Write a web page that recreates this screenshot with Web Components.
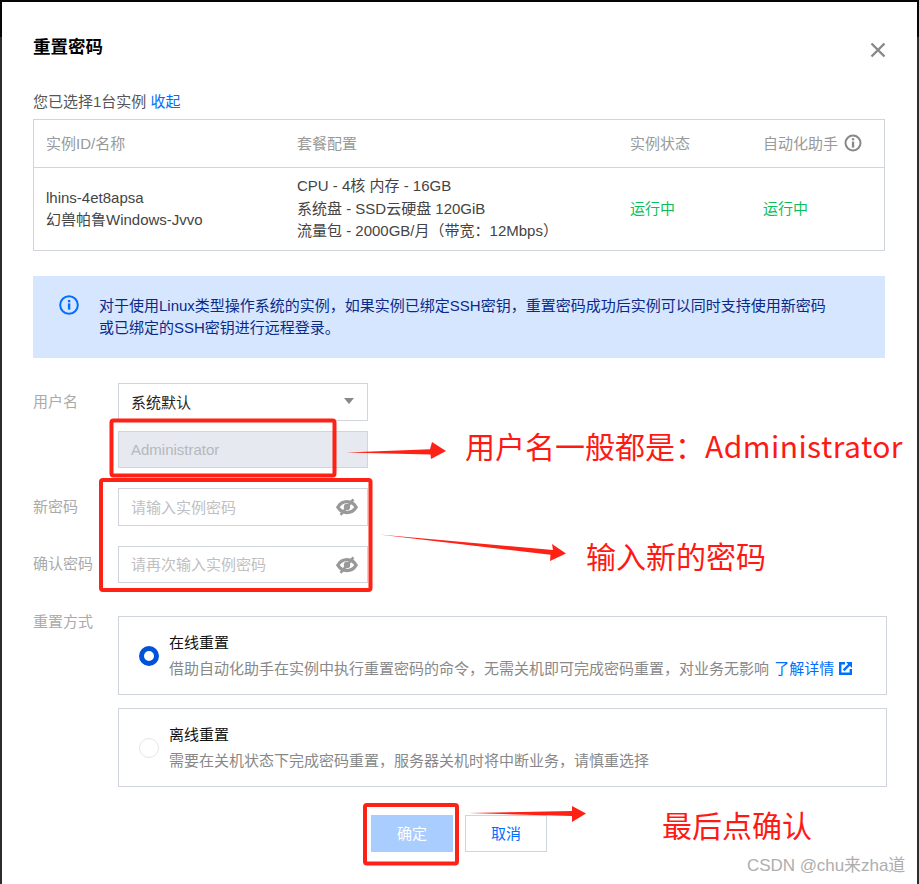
<!DOCTYPE html>
<html lang="zh">
<head>
<meta charset="utf-8">
<style>
html,body{margin:0;padding:0;height:884px;overflow:hidden}
body{background:linear-gradient(#060606 37px,#2c2c2c 37px);font-family:"Liberation Sans","Noto Sans CJK SC",sans-serif;font-size:15px;color:#444}
</style>
</head>
<body>
<reset-dialog>
  <span slot="title">重置密码</span>
  <selected-line>您已选择1台实例 <a>收起</a></selected-line>
  <instance-table></instance-table>
  <info-notice>对于使用Linux类型操作系统的实例，如果实例已绑定SSH密钥，重置密码成功后实例可以同时支持使用新密码<br>或已绑定的SSH密钥进行远程登录。</info-notice>
  <form-row label="用户名" h="38" gap="25"><select-box>系统默认</select-box></form-row>
  <form-row h="37" gap="10"><text-box disabled>Administrator</text-box></form-row>
  <form-row label="新密码" h="38" gap="20"><text-box eye>请输入实例密码</text-box></form-row>
  <form-row label="确认密码" h="37" lh="35" gap="20"><text-box eye>请再次输入实例密码</text-box></form-row>
  <form-row label="重置方式" h="79" lh="11" gap="33">
    <radio-card checked>
      <span slot="title">在线重置</span>借助自动化助手在实例中执行重置密码的命令，无需关机即可完成密码重置，对业务无影响 <ext-link>了解详情</ext-link>
    </radio-card>
  </form-row>
  <form-row h="79" gap="13">
    <radio-card>
      <span slot="title">离线重置</span>需要在关机状态下完成密码重置，服务器关机时将中断业务，请慎重选择
    </radio-card>
  </form-row>
  <button-bar><action-button primary>确定</action-button><action-button>取消</action-button></button-bar>
</reset-dialog>
<red-annotations></red-annotations>

<script>
function def(name, css, html, init){
  customElements.define(name, class extends HTMLElement{
    connectedCallback(){
      if(this.shadowRoot) return;
      const r=this.attachShadow({mode:'open'});
      r.innerHTML='<style>'+css+'</style>'+html;
      if(init) init(this,r);
    }
  });
}
def('reset-dialog',`
  :host{display:block;position:absolute;left:2px;top:2px;width:915px;height:882px;box-sizing:border-box;background:#fff;padding:33px 30px 0 31px}
  .t{font-size:17.5px;font-weight:700;color:#000;line-height:24px}
  svg{position:absolute;left:868px;top:40px}
`,`<div class="t"><slot name="title"></slot></div>
<svg width="16" height="16" viewBox="0 0 16 16"><path d="M1.5 1.5L14.5 14.5M14.5 1.5L1.5 14.5" stroke="#888" stroke-width="2.4" fill="none"/></svg>
<slot></slot>`);
def('selected-line',`
  :host{display:block;margin-top:32px;line-height:22px;color:#555}
  ::slotted(a){color:#006eff}
`,`<slot></slot>`);
def('instance-table',`
  :host{display:block;width:852px;margin-top:6px;border:1px solid #d0d5dd;box-sizing:border-box;height:132px}
  .r{display:grid;grid-template-columns:251px 333px 133px 1fr;padding-left:12px}
  .h{align-items:center;border-bottom:1px solid #d0d5dd;color:#999;padding-bottom:2px;box-sizing:content-box;height:45px}
  .b{height:82px;align-items:center;color:#444;line-height:22.5px}
  .g{color:#0abf5b}
  .i{display:flex;align-items:center;gap:6px}
  .n{line-height:22px}
`,`<div class="r h"><div>实例ID/名称</div><div>套餐配置</div><div>实例状态</div><div class="i">自动化助手
<svg width="18" height="18" viewBox="0 0 18 18"><circle cx="9" cy="9" r="7.5" fill="none" stroke="#888" stroke-width="2"/><rect x="7.9" y="7.6" width="2.3" height="6" fill="#888"/><rect x="7.9" y="4.2" width="2.3" height="2.1" fill="#888"/></svg></div></div>
<div class="r b"><div class="n">lhins-4et8apsa<br>幻兽帕鲁Windows-Jvvo</div><div>CPU - 4核 内存 - 16GB<br>系统盘 - SSD云硬盘 120GiB<br>流量包 - 2000GB/月（带宽：12Mbps）</div><div class="g">运行中</div><div class="g">运行中</div></div>`);
def('info-notice',`
  :host{display:flex;width:852px;height:82px;margin-top:25px;box-sizing:border-box;background:#d5e6fe;padding:19px 0 0 26px;gap:20px;color:#0a2a8a;line-height:22px}
  svg{flex:none}
`,`<svg width="20" height="20" viewBox="0 0 20 20"><circle cx="10" cy="10" r="8.8" fill="none" stroke="#006eff" stroke-width="2"/><rect x="8.9" y="8.4" width="2.4" height="6.2" fill="#006eff"/><rect x="8.9" y="5" width="2.4" height="2.3" fill="#006eff"/></svg><div><slot></slot></div>`);
def('form-row',`
  :host{display:flex;align-items:flex-start}
  .l{width:85px;flex:none;color:#aaa;font-size:15px}
`,`<div class="l"></div><slot></slot>`,(el,r)=>{
  el.style.marginTop=el.getAttribute('gap')+'px';
  el.style.height=el.getAttribute('h')+'px';
  const l=r.querySelector('.l');
  l.textContent=el.getAttribute('label')||'';
  l.style.lineHeight=(el.getAttribute('lh')||el.getAttribute('h'))+'px';
});
def('select-box',`
  :host{display:flex;align-items:center;justify-content:space-between;width:250px;height:38px;box-sizing:border-box;border:1px solid #d0d5dd;padding:0 13px 2px 12px;color:#222;background:#fff}
  i{width:0;height:0;border-left:5px solid transparent;border-right:5px solid transparent;border-top:6px solid #888}
`,`<span><slot></slot></span><i></i>`);
def('text-box',`
  :host{display:flex;align-items:center;justify-content:space-between;width:250px;height:100%;box-sizing:border-box;border:1px solid #d0d5dd;padding:0 9px 0 12px;color:#c0c0c0;background:#fff}
  :host([disabled]){background:#e6e9ef;color:#b5b8bd}
  :host([eye]) span{padding-bottom:2px}
  svg{display:none}
  :host([eye]) svg{display:block}
`,`<span><slot></slot></span>
<svg width="22" height="18" viewBox="0 0 22 18"><path d="M1.8 9.2C4 5.4 7.4 3.6 11 3.6s7 1.8 9.2 5.6C18 12.8 14.6 14.6 11 14.6S4 12.8 1.8 9.2Z" fill="none" stroke="#999" stroke-width="3.2"/><circle cx="11" cy="9" r="3.2" fill="#999"/><path d="M4.6 16.8L17.4 1.4" stroke="#999" stroke-width="2.6"/></svg>`);
def('radio-card',`
  :host{display:flex;align-items:center;width:769px;height:79px;box-sizing:border-box;border:1px solid #d0d5dd;padding-left:20px;gap:10px}
  .r{width:20px;height:20px;box-sizing:border-box;border-radius:50%;border:1px solid #e3e6eb;background:#fff;flex:none}
  :host([checked]) .r{border:5.5px solid #0052d9}
  .t{color:#111;line-height:26px}
  .d{color:#888;line-height:26px}
`,`<div class="r"></div><div><div class="t"><slot name="title"></slot></div><div class="d"><slot></slot></div></div>`);
def('ext-link',`
  :host{color:#006eff;display:inline-flex;align-items:center;gap:5px;vertical-align:top;margin-left:1px}
`,`<slot></slot><svg width="13" height="13" viewBox="0 0 13 13"><path d="M6 1.2H1.2V11.8H11.8V7" fill="none" stroke="#006eff" stroke-width="2.4"/><path d="M4.6 8.4L10.6 2.4" stroke="#006eff" stroke-width="2.4"/><path d="M7 0H13V6Z" fill="#006eff"/></svg>`);
def('button-bar',`
  :host{display:flex;justify-content:center;gap:12px;width:852px;margin-top:28px}
`,`<slot></slot>`);
def('action-button',`
  :host{display:flex;align-items:center;justify-content:center;width:82px;height:37px;box-sizing:border-box;border:1px solid #d0d5dd;color:#006eff;background:#fff;padding-bottom:2px}
  :host([primary]){background:#a9cdfe;border-color:#a9cdfe;color:#fff}
`,`<slot></slot>`);
def('red-annotations',`
  :host{display:block;position:absolute;left:0;top:0;width:919px;height:884px;pointer-events:none}
  svg{position:absolute;left:0;top:0}
  .t{position:absolute;color:#fe1a14;font-size:30px;line-height:40px;white-space:nowrap;font-family:"Noto Sans CJK SC","Liberation Sans",sans-serif}
  .t b{font-weight:400;letter-spacing:.45px}
  .w{position:absolute;left:747px;top:855px;color:#aeaeae;font-size:17px;line-height:22px;white-space:nowrap;letter-spacing:-.05px}
`,`<svg width="919" height="884" viewBox="0 0 919 884">
<g fill="none" stroke="#fe2115" stroke-width="4">
<rect x="111.5" y="420.5" width="223" height="55" rx="2"/>
<rect x="101" y="480" width="269.5" height="110" rx="2"/>
<rect x="365" y="805" width="92" height="58.5" rx="2"/>
</g>
<g fill="#fe2115">
<path d="M346 452.6L430 449.2L432 442L446 451L431 459L430.5 454.6Z"/>
<path d="M379 534.5L553 550L552 544L566 553.5L550 561L550.5 554.8Z"/>
<path d="M469 813L572 811L572 806L586 813.5L572 822L572 816Z"/>
</g></svg>
<div class="t" style="left:465px;top:425px">用户名一般都是：<b>Administrator</b></div>
<div class="t" style="left:586px;top:535px">输入新的密码</div>
<div class="t" style="left:662px;top:804px">最后点确认</div>
<div class="w">CSDN @chu来zha道</div>`);
</script>
</body>
</html>
